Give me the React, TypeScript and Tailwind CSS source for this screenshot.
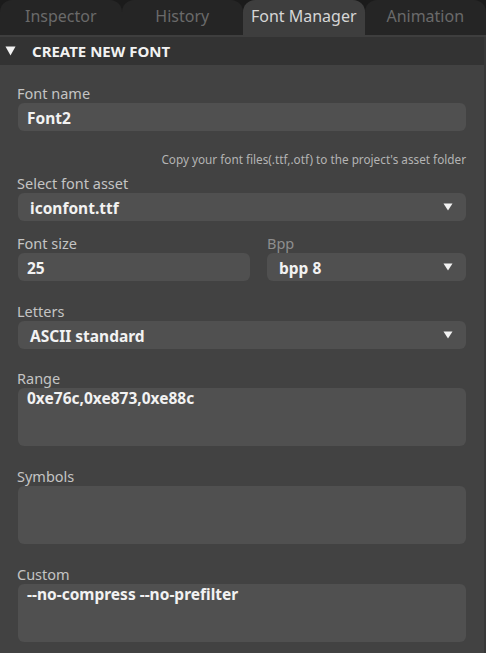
const tabs = ['Inspector', 'History', 'Font Manager', 'Animation'];

function Caret() {
    return (
        <svg width="10" height="8" viewBox="0 0 10 8" className="shrink-0">
            <path d="M0.5 0.5 L9.5 0.5 L5 7.5 Z" fill="#f2f2f2" />
        </svg>
    );
}

function Label({ children, dim = false }: { children: React.ReactNode; dim?: boolean }) {
    return (
        <div className={`h-[18px] text-[14.5px] leading-[18px] pl-[17px] ${dim ? 'text-[#8e8e8e]' : 'text-[#c4c4c4]'}`}>
            {children}
        </div>
    );
}

function TextInput({ value }: { value: string }) {
    return (
        <div className="mt-px h-[28px] rounded-[6px] bg-[#505050] pl-[9px] pt-[1px] text-[15.5px] leading-[28px] font-bold text-[#f2f2f2]">
            {value}
        </div>
    );
}

function Select({ value }: { value: string }) {
    return (
        <div className="mt-px h-[28px] rounded-[6px] bg-[#505050] flex items-center justify-between pl-[12px] pr-[13px] text-[15.5px] font-bold text-[#f2f2f2]">
            <span className="leading-[28px] pt-[1px]">{value}</span>
            <Caret />
        </div>
    );
}

function TextArea({ value }: { value: string }) {
    return (
        <div className="mt-px h-[58px] rounded-[6px] bg-[#505050] pl-[9px] pt-px text-[15.5px] leading-[18px] font-bold text-[#f2f2f2]">
            {value}
        </div>
    );
}

export default function App() {
    return (
        <div
            className="w-[486px] h-[653px] overflow-hidden bg-[#424242] flex flex-col"
            style={{ fontFamily: '"Noto Sans", "Open Sans", sans-serif' }}
        >
            {/* Tabs */}
            <div className="h-[35px] bg-[#1b1b1b] grid grid-cols-4 shrink-0">
                {tabs.map((t) => (
                    <div
                        key={t}
                        className={`rounded-t-[12px] flex items-center justify-center pb-[3px] text-[16px] ${
                            t === 'Font Manager' ? 'bg-[#3e3e3e] text-[#d6d6d6]' : 'bg-[#252525] text-[#6a6a6a]'
                        }`}
                    >
                        {t}
                    </div>
                ))}
            </div>
            <div className="h-[2px] bg-[#3e3e3e] shrink-0" />

            <div className="flex-1 flex flex-col border-r-2 border-[#383838]">
                {/* Section header */}
                <div className="h-[28px] bg-[#333333] flex items-center gap-[16px] pl-[5px] shrink-0">
                    <svg width="11" height="10" viewBox="0 0 11 10">
                        <path d="M0.5 0.5 L10.5 0.5 L5.5 9.5 Z" fill="#f2f2f2" />
                    </svg>
                    <span className="text-[15px] font-bold text-[#f2f2f2] leading-none">CREATE NEW FONT</span>
                </div>

                {/* Form */}
                <div className="pt-[19px] pr-[18px]">
                    <Label>Font name</Label>
                    <div className="pl-[18px]">
                        <TextInput value="Font2" />
                    </div>

                    <div className="mt-[20px] h-[16px] text-[11.75px] leading-[16px] text-[#b4b4b4] text-right">
                        Copy your font files(.ttf,.otf) to the project's asset folder
                    </div>

                    <div className="mt-[7px]">
                        <Label>Select font asset</Label>
                        <div className="pl-[18px]">
                            <Select value="iconfont.ttf" />
                        </div>
                    </div>

                    <div className="mt-[13px] grid grid-cols-[250px_1fr] gap-[17px]">
                        <div>
                            <Label>Font size</Label>
                            <div className="pl-[18px]">
                                <TextInput value="25" />
                            </div>
                        </div>
                        <div>
                            <div className="h-[18px] text-[14.5px] leading-[18px] text-[#8e8e8e]">Bpp</div>
                            <Select value="bpp 8" />
                        </div>
                    </div>

                    <div className="mt-[21px]">
                        <Label>Letters</Label>
                        <div className="pl-[18px]">
                            <Select value="ASCII standard" />
                        </div>
                    </div>

                    <div className="mt-[20px]">
                        <Label>Range</Label>
                        <div className="pl-[18px]">
                            <TextArea value="0xe76c,0xe873,0xe88c" />
                        </div>
                    </div>

                    <div className="mt-[21px]">
                        <Label>Symbols</Label>
                        <div className="pl-[18px]">
                            <TextArea value="" />
                        </div>
                    </div>

                    <div className="mt-[21px]">
                        <Label>Custom</Label>
                        <div className="pl-[18px]">
                            <TextArea value="--no-compress --no-prefilter" />
                        </div>
                    </div>
                </div>
            </div>
        </div>
    );
}
